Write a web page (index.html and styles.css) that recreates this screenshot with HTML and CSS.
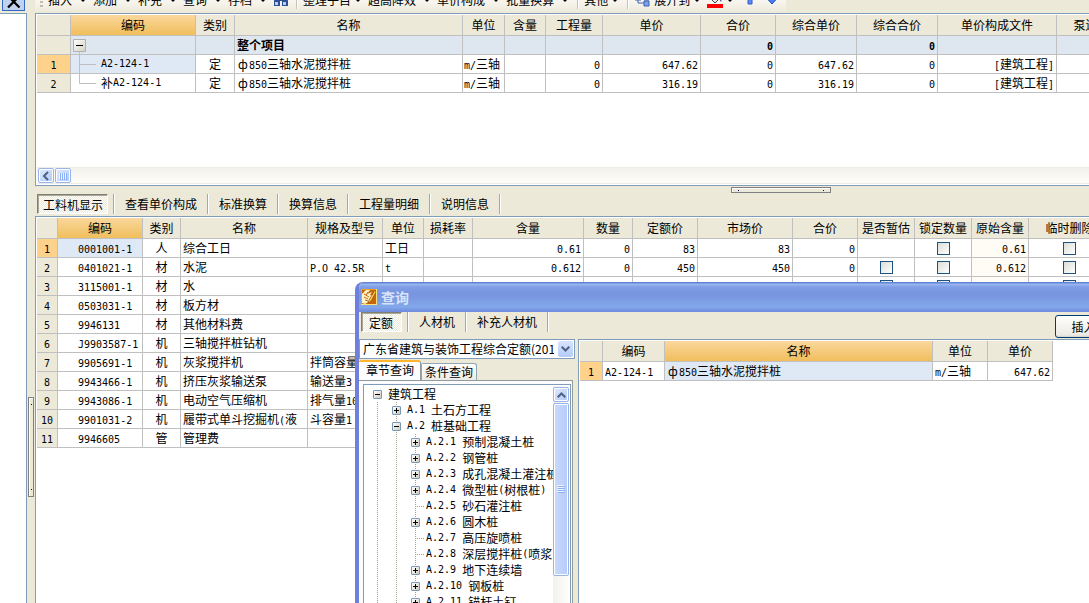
FILE: index.html
```html
<!DOCTYPE html>
<html lang="zh-CN">
<head>
<meta charset="utf-8">
<title>工料机显示</title>
<link rel="stylesheet" href="styles.css">
</head>
<body>
<div class="app">
  <aside class="side">
    <div class="side-head">
      <button class="close" aria-label="关闭"><svg width="14" height="10" viewBox="0 0 14 10"><path d="M1 -4L12.500 7.500M12.500 -4L1 7.500" stroke="#000" stroke-width="2.200"/></svg></button>
    </div>
    <div class="side-body"></div>
  </aside>
  <div class="gutter"><span class="grip-v"></span></div>
  <main class="main">
    <nav class="toolbar">
      <div class="tools">
        <span class="handle"></span>
        <button class="tool">插入<i class="arrow"></i></button>
        <button class="tool">添加<i class="arrow"></i></button>
        <button class="tool">补充<i class="arrow"></i></button>
        <button class="tool">查询<i class="arrow"></i></button>
        <button class="tool">存档<i class="arrow"></i></button>
        <button class="tool icon" aria-label="查找"><svg width="16" height="14" viewBox="0 0 16 14"><path d="M2 0h4v3h4V0h4v4l1 4v5H9V8H7v5H1V8l1-4z" fill="#2c4f94"/><path d="M2 9h3v3H2zM10 9h3v3h-3z" fill="#b9cdf0"/><path d="M3 2h2v4H3zM11 2h2v4h-2z" fill="#6f93d8"/></svg></button>
        <span class="divider"></span>
        <button class="tool tight">整理子目<i class="arrow"></i></button>
        <button class="tool">超高降效<i class="arrow"></i></button>
        <button class="tool">单价构成<i class="arrow"></i></button>
        <button class="tool">批量换算<i class="arrow"></i></button>
        <span class="divider"></span>
        <button class="tool tight">其他<i class="arrow"></i></button>
        <span class="divider"></span>
        <button class="tool tight lead"><svg width="16" height="14" viewBox="0 0 16 14"><path d="M1 2h6v5H1z" fill="#dfe9fb" stroke="#3d63b0"/><path d="M4 7v3h6M7 5h3" stroke="#3d63b0" fill="none"/><path d="M10 3h5v4h-5zM10 8h5v5h-5z" fill="#7ea3e8" stroke="#3d63b0"/></svg>展开到<i class="arrow"></i></button>
        <button class="tool tight" aria-label="填充颜色"><svg width="16" height="16" viewBox="0 0 16 16"><path d="M3 6l5-5 5 5-5 5z" fill="#e8e8e8" stroke="#444"/><path d="M13 5q2 3 1 5l-2-4z" fill="#1c2c80"/><path d="M0 12h16v4H0z" fill="#f00"/></svg><i class="arrow"></i></button>
        <button class="tool move" aria-label="上移"><svg width="10" height="10" viewBox="0 0 10 10"><path d="M5 -4l4 4H7v9H3V0H1z" fill="#5b8df0" stroke="#2f5cc8"/></svg></button>
        <button class="tool move" aria-label="下移"><svg width="12" height="10" viewBox="0 0 12 10"><path d="M4 -2h4v5h3.500L6 9 .5 3H4z" fill="#4a7fee" stroke="#2450bd"/></svg></button>
      </div>
    </nav>

    <section class="panel upper">
      <div class="upper-body">
      <table class="grid">
        <colgroup><col class="w34"><col class="w125"><col class="w39"><col class="w228"><col class="w42"><col class="w41"><col class="w57"><col class="w98"><col class="w75"><col class="w81"><col class="w81"><col class="w119"><col class="w82"></colgroup>
        <thead><tr><th></th><th class="hot">编码</th><th>类别</th><th>名称</th><th>单位</th><th>含量</th><th>工程量</th><th>单价</th><th>合价</th><th>综合单价</th><th>综合合价</th><th>单价构成文件</th><th>泵送类型</th></tr></thead>
        <tbody>
          <tr class="sum"><th></th><td><div class="branch"><svg class="lines" width="30" height="19"><defs><linearGradient id="tg" x2="1" y2="1"><stop offset="0" stop-color="#fff"/><stop offset="1" stop-color="#d4d0c0"/></linearGradient></defs><path d="M8.500 16v3" stroke="#c0c0c0"/><path d="M2.500 3.500h12v12h-12z" fill="url(#tg)" stroke="#b0b0b0"/><path d="M5 9.500h7" stroke="#000"/></svg></div></td><td></td><td>整个项目</td><td></td><td></td><td></td><td></td><td class="r"><span class="n">0</span></td><td></td><td class="r"><span class="n">0</span></td><td></td><td></td></tr>
          <tr><th class="on"><span class="n">1</span></th><td class="sel"><div class="branch"><svg class="lines" width="30" height="19"><path d="M8.500 0v19M8 9.500h17" fill="none" stroke="#c0c0c0"/></svg><span class="n">A2-124-1</span></div></td><td class="c">定</td><td><span class="em">ф</span><span class="n">850</span>三轴水泥搅拌桩</td><td class="t"><span class="n">m/</span>三轴</td><td></td><td class="r"><span class="n">0</span></td><td class="r"><span class="n">647.62</span></td><td class="r"><span class="n">0</span></td><td class="r"><span class="n">647.62</span></td><td class="r"><span class="n">0</span></td><td class="r"><span class="n">[</span>建筑工程<span class="n">]</span></td><td></td></tr>
          <tr><th><span class="n">2</span></th><td><div class="branch"><svg class="lines" width="30" height="19"><path d="M8.500 0v9.500h16.500" fill="none" stroke="#c0c0c0"/></svg>补<span class="n">A2-124-1</span></div></td><td class="c">定</td><td><span class="em">ф</span><span class="n">850</span>三轴水泥搅拌桩</td><td class="t"><span class="n">m/</span>三轴</td><td></td><td class="r"><span class="n">0</span></td><td class="r"><span class="n">316.19</span></td><td class="r"><span class="n">0</span></td><td class="r"><span class="n">316.19</span></td><td class="r"><span class="n">0</span></td><td class="r"><span class="n">[</span>建筑工程<span class="n">]</span></td><td></td></tr>
        </tbody>
      </table>
      </div>
      <div class="hscroll">
        <button class="sb" aria-label="向左滚动"><svg width="8" height="8" viewBox="0 0 8 8"><path d="M6 0L2 4l4 4" fill="none" stroke="#4d6185" stroke-width="2"/></svg></button>
        <button class="sb" aria-label="滑块"><svg width="8" height="8" viewBox="0 0 8 8"><path d="M.5 1v6M2.500 1v6M4.500 1v6M6.500 1v6" stroke="#eef4fe"/><path d="M1.500 1v7M3.500 1v7M5.500 1v7M7.500 1v7" stroke="#8cb0f8"/></svg></button>
      </div>
    </section>

    <div class="tabs">
      <span class="grip-h"></span>
      <button class="tab active">工料机显示</button>
      <button class="tab">查看单价构成</button>
      <button class="tab">标准换算</button>
      <button class="tab">换算信息</button>
      <button class="tab">工程量明细</button>
      <button class="tab">说明信息</button>
      <span class="tab-end"></span>
    </div>

    <section class="panel lower">
      <table class="grid">
        <colgroup><col class="w21"><col class="w85"><col class="w38"><col class="w127"><col class="w75"><col class="w41"><col class="w49"><col class="w111"><col class="w49"><col class="w65"><col class="w95"><col class="w65"><col class="w57"><col class="w57"><col class="w57"><col class="w82"></colgroup>
        <thead><tr><th></th><th class="hot">编码</th><th>类别</th><th>名称</th><th>规格及型号</th><th>单位</th><th>损耗率</th><th>含量</th><th>数量</th><th>定额价</th><th>市场价</th><th>合价</th><th>是否暂估</th><th>锁定数量</th><th>原始含量</th><th>临时删除</th></tr></thead>
        <tbody>
          <tr><th class="on"><span class="n">1</span></th><td class="code sel"><span class="n">0001001-1</span></td><td class="c">人</td><td>综合工日</td><td></td><td>工日</td><td></td><td class="r"><span class="n">0.61</span></td><td class="r"><span class="n">0</span></td><td class="r"><span class="n">83</span></td><td class="r"><span class="n">83</span></td><td class="r"><span class="n">0</span></td><td></td><td class="c"><input type="checkbox" aria-label="锁定数量 1"></td><td class="r orig"><span class="n">0.61</span></td><td class="c"><input type="checkbox" aria-label="临时删除 1"></td></tr>
          <tr><th><span class="n">2</span></th><td class="code"><span class="n">0401021-1</span></td><td class="c">材</td><td>水泥</td><td><span class="n">P.O 42.5R</span></td><td><span class="n">t</span></td><td></td><td class="r"><span class="n">0.612</span></td><td class="r"><span class="n">0</span></td><td class="r"><span class="n">450</span></td><td class="r"><span class="n">450</span></td><td class="r"><span class="n">0</span></td><td class="c"><input type="checkbox" aria-label="是否暂估 2"></td><td class="c"><input type="checkbox" aria-label="锁定数量 2"></td><td class="r orig"><span class="n">0.612</span></td><td class="c"><input type="checkbox" aria-label="临时删除 2"></td></tr>
          <tr><th><span class="n">3</span></th><td class="code"><span class="n">3115001-1</span></td><td class="c">材</td><td>水</td><td></td><td></td><td></td><td></td><td></td><td></td><td></td><td></td><td class="c"><input type="checkbox" aria-label="是否暂估 3"></td><td class="c"><input type="checkbox" aria-label="锁定数量 3"></td><td class="orig"></td><td class="c"><input type="checkbox" aria-label="临时删除 3"></td></tr>
          <tr><th><span class="n">4</span></th><td class="code"><span class="n">0503031-1</span></td><td class="c">材</td><td>板方材</td><td></td></tr>
          <tr><th><span class="n">5</span></th><td class="code"><span class="n">9946131</span></td><td class="c">材</td><td>其他材料费</td><td></td></tr>
          <tr><th><span class="n">6</span></th><td class="code"><span class="n">J9903587-1</span></td><td class="c">机</td><td>三轴搅拌桩钻机</td><td></td></tr>
          <tr><th><span class="n">7</span></th><td class="code"><span class="n">9905691-1</span></td><td class="c">机</td><td>灰浆搅拌机</td><td>拌筒容量</td></tr>
          <tr><th><span class="n">8</span></th><td class="code"><span class="n">9943466-1</span></td><td class="c">机</td><td>挤压灰浆输送泵</td><td>输送量<span class="n">3</span></td></tr>
          <tr><th><span class="n">9</span></th><td class="code"><span class="n">9943086-1</span></td><td class="c">机</td><td>电动空气压缩机</td><td>排气量<span class="n">10</span></td></tr>
          <tr><th><span class="n">10</span></th><td class="code"><span class="n">9901031-2</span></td><td class="c">机</td><td>履带式单斗挖掘机<span class="n">(</span>液</td><td>斗容量<span class="n">1</span></td></tr>
          <tr><th><span class="n">11</span></th><td class="code"><span class="n">9946605</span></td><td class="c">管</td><td>管理费</td><td></td></tr>
        </tbody>
      </table>
    </section>
  </main>
</div>

<div class="dialog" role="dialog" aria-labelledby="dlg-title">
  <header class="title">
    <svg width="16" height="16" viewBox="0 0 16 16"><path d="M0 0h16v16H0z" fill="#f0a010"/><path d="M1 1h14v14H1z" fill="#c8640c"/><path d="M1 5l4-4h4l-3 4 5-2-2 3 3 1-4 3 1 2-5 3-3-1z" fill="#fff4c8"/><path d="M3 5l5 3M3 8l4 2M4 11l3 1M7 3L5 6" stroke="#c8640c"/><path d="M14 1L8 11l-1 3 3-2 5-9z" fill="#ffd850" stroke="#8a3c04" stroke-width=".6"/><path d="M0 15.500h16M15.500 0v16" stroke="#ffe27a"/></svg>
    <span id="dlg-title">查询</span>
  </header>
  <div class="dlg-tabs">
    <button class="tab active">定额</button>
    <button class="tab">人材机</button>
    <button class="tab">补充人材机</button>
    <span class="tab-end"></span>
    <button class="insert">插入<span class="n">(I)</span></button>
  </div>
  <div class="dlg-body">
    <div class="finder">
      <div class="combo">
        <select aria-label="定额库"><option>广东省建筑与装饰工程综合定额(2010)</option></select>
        <span class="drop"><svg width="9" height="6" viewBox="0 0 9 6"><path d="M.7.700l3.800 3.800L8.300.700" fill="none" stroke="#4d6185" stroke-width="2"/></svg></span>
      </div>
      <div class="pages">
        <button class="page current">章节查询</button>
        <button class="page">条件查询</button>
      </div>
      <div class="sheet">
        <div class="treebox">
          <div class="treeview">
            <ul class="tree">
              <li><span class="node"><i class="box minus"></i>建筑工程</span>
                <ul>
                  <li><span class="node"><i class="box plus"></i><span class="n">A.1 </span>土石方工程</span></li>
                  <li><span class="node"><i class="box minus"></i><span class="n">A.2 </span>桩基础工程</span>
                    <ul>
                      <li><span class="node"><i class="box plus"></i><span class="n">A.2.1 </span>预制混凝土桩</span></li>
                      <li><span class="node"><i class="box plus"></i><span class="n">A.2.2 </span>钢管桩</span></li>
                      <li><span class="node"><i class="box plus"></i><span class="n">A.2.3 </span>成孔混凝土灌注桩</span></li>
                      <li><span class="node"><i class="box plus"></i><span class="n">A.2.4 </span>微型桩<span class="n">(</span>树根桩<span class="n">)</span></span></li>
                      <li><span class="node"><i class="box leaf"></i><span class="n">A.2.5 </span>砂石灌注桩</span></li>
                      <li><span class="node"><i class="box plus"></i><span class="n">A.2.6 </span>圆木桩</span></li>
                      <li><span class="node"><i class="box leaf"></i><span class="n">A.2.7 </span>高压旋喷桩</span></li>
                      <li><span class="node"><i class="box leaf"></i><span class="n">A.2.8 </span>深层搅拌桩<span class="n">(</span>喷浆</span></li>
                      <li><span class="node"><i class="box plus"></i><span class="n">A.2.9 </span>地下连续墙</span></li>
                      <li><span class="node"><i class="box plus"></i><span class="n">A.2.10 </span>钢板桩</span></li>
                      <li><span class="node"><i class="box plus"></i><span class="n">A.2.11 </span>锚杆土钉</span></li>
                    </ul>
                  </li>
                </ul>
              </li>
            </ul>
          </div>
          <div class="vscroll">
            <button class="sb" aria-label="向上滚动"><svg width="9" height="6" viewBox="0 0 9 6"><path d="M.7 5.300l3.800-3.800 3.800 3.800" fill="none" stroke="#4d6185" stroke-width="2"/></svg></button>
            <button class="thumb" aria-label="滑块"><svg width="8" height="8" viewBox="0 0 8 8"><path d="M0 .5h7M0 2.500h7M0 4.500h7M0 6.500h7" stroke="#eef4fe"/><path d="M1 1.500h7M1 3.500h7M1 5.500h7M1 7.500h7" stroke="#8cb0f8"/></svg></button>
          </div>
        </div>
      </div>
    </div>
    <div class="results">
      <table class="grid">
        <colgroup><col class="w23"><col class="w62"><col class="w268"><col class="w55"><col class="w65"></colgroup>
        <thead><tr><th></th><th>编码</th><th class="hot">名称</th><th>单位</th><th>单价</th></tr></thead>
        <tbody><tr><th class="on"><span class="n">1</span></th><td><span class="n">A2-124-1</span></td><td class="sel"><span class="em">ф</span><span class="n">850</span>三轴水泥搅拌桩</td><td><span class="n">m/</span>三轴</td><td class="r"><span class="n">647.62</span></td></tr></tbody>
      </table>
    </div>
  </div>
</div>
</body>
</html>
```

FILE: styles.css
```css
* { box-sizing: border-box; }

body {
  margin: 0;
  height: 100vh;
  overflow: hidden;
  background: #ece9d8;
  color: #000;
  font: 12px/16px "Noto Sans CJK SC", sans-serif;
}

button, select { font: inherit; color: inherit; margin: 0; }
button { padding: 0; border: 0; background: none; white-space: nowrap; }
svg { display: block; flex: none; overflow: visible; }
i { font-style: normal; }

/* half-width characters */
.n { font-family: "DejaVu Sans Mono", monospace; font-size: 10px; line-height: 12px; white-space: pre; }
/* full-width symbol */
.em { display: inline-block; width: 12px; text-align: center; line-height: 14px; }

.app { display: flex; height: 100vh; }

.side { flex: none; width: 27px; display: flex; flex-direction: column; }
.side-head { height: 13px; padding: 0 2px; overflow: hidden; }
.close {
  display: block; width: 23px; height: 11px; padding-left: 4px;
  background: #c1d2ee; border: 1px solid #316ac5; border-top: 0;
}
.side-body { flex: 1; background: #fff; border: 1px solid #7f9db9; border-width: 1px 1px 0 0; }

.gutter { position: relative; flex: none; width: 8px; }
.grip-v, .grip-h { position: absolute; background: #ece9d8; border: 1px solid #808080; box-shadow: inset 1px 1px #fff; }
.grip-v { left: 1px; top: 397px; width: 6px; height: 100px; }
.grip-h { left: 696px; top: 1px; width: 100px; height: 6px; }
.grip-v::before, .grip-v::after, .grip-h::before, .grip-h::after {
  content: ""; position: absolute; width: 1px; height: 1px; background: #000080;
}
.grip-v::before { left: 2px; top: 6px; }
.grip-v::after { left: 2px; bottom: 6px; }
.grip-h::before { left: 6px; top: 2px; }
.grip-h::after { right: 6px; top: 2px; }

.main { flex: 1; min-width: 0; display: flex; flex-direction: column; }

.toolbar { flex: none; height: 13px; overflow: hidden; display: flex; align-items: flex-end; }
.tools {
  display: flex; align-items: center; height: 26px; padding: 0 2px 0 5px;
  background: linear-gradient(#fbfaf6, #f6f4ec 60%, #ece9d8);
}
.handle { width: 3px; height: 15px; margin-right: 5px; background: repeating-linear-gradient(#c1beb0 0 2px, transparent 2px 4px); }
.tool { display: flex; align-items: center; height: 26px; }
.arrow { border: 3px solid transparent; border-top-color: #000; border-bottom: 0; margin: 0 7px 0 8px; }
.tight .arrow { margin-left: 4px; }
.icon { margin-right: 5px; }
.lead svg { margin-right: 4px; }
.move { margin: 0 6px 0 5px; }
.divider { width: 2px; height: 18px; margin: 0 5px 0 2px; background: #c5c2b8; border-right: 1px solid #fff; }

.panel { background: #fff; border-left: 1px solid #7f9db9; border-top: 1px solid #7f9db9; padding: 1px 0 0 1px; overflow: hidden; }
.upper { flex: none; border-bottom: 1px solid #7f9db9; padding-bottom: 1px; }
.upper-body { min-height: 152px; }
.lower { flex: 1; }

.grid { table-layout: fixed; width: 1px; border-collapse: separate; border-spacing: 0; }
.grid th, .grid td {
  height: 19px; padding: 0 2px; overflow: hidden; white-space: nowrap;
  border: solid #c0c0c0; border-width: 0 1px 1px 0; text-align: left; font-weight: normal; line-height: 16px;
}
.grid th { background: #ece9d8; text-align: center; padding: 0; }
.grid thead th { height: 21px; }
.grid .hot { background: linear-gradient(#fad79c, #f0be5c); }
.grid .on { background: #ffd28c; }
.grid .sel { background: #dfe9f5; }
.grid .sum td { background: #dee6f0; font-weight: bold; }
.grid .r { text-align: right; }
.grid .c { text-align: center; }
.grid .t { padding: 0 1px; }
.grid .code { padding: 0 0 0 20px; }
.grid .orig { background: #fffbf5; }
.branch { display: flex; align-items: center; height: 18px; margin-left: -2px; }
.lines { height: 19px; }

.w21 { width: 21px; } .w23 { width: 23px; } .w34 { width: 34px; } .w38 { width: 38px; }
.w39 { width: 39px; } .w41 { width: 41px; } .w42 { width: 42px; } .w49 { width: 49px; }
.w55 { width: 55px; } .w57 { width: 57px; } .w62 { width: 62px; } .w65 { width: 65px; }
.w75 { width: 75px; } .w81 { width: 81px; } .w82 { width: 82px; } .w85 { width: 85px; }
.w95 { width: 95px; } .w98 { width: 98px; } .w111 { width: 111px; } .w119 { width: 119px; }
.w125 { width: 125px; } .w127 { width: 127px; } .w228 { width: 228px; } .w268 { width: 268px; }

input[type="checkbox"] {
  appearance: none; display: block; width: 13px; height: 13px; margin: 0 auto;
  border: 1px solid #1c5180; background: linear-gradient(135deg, #dcdcd7, #fff);
}

.hscroll {
  display: flex; gap: 1px; height: 17px; padding: 0 1px;
  border-top: 1px solid #eeede5; border-bottom: 1px solid #eeede5;
  background: linear-gradient(#f3f1ec, #fefefb);
}
.sb {
  flex: none; display: flex; align-items: center; justify-content: center; width: 16px; height: 15px;
  border: 1px solid #98b4ee; border-radius: 2px; box-shadow: inset 0 0 0 1px #fff;
  background: linear-gradient(135deg, #e1eafe, #aec8f7);
}

.tabs { position: relative; flex: none; display: flex; height: 30px; padding: 8px 0 2px 2px; }
.tab { height: 20px; padding: 0 10px 0 11px; border-left: 1px solid #aca899; box-shadow: inset 1px 0 #fff; }
.tab-end { width: 2px; height: 20px; border-left: 1px solid #aca899; background: #fff; }
.tab.active {
  margin-right: 5px; padding: 2px 4px 0 5px;
  border: 1px solid #fff; border-top-color: #808070; border-left-color: #808070;
  box-shadow: inset 1px 1px #aca899;
  background: repeating-conic-gradient(#fff 0 25%, #ece9d8 0 50%) 0 0 / 2px 2px;
}

.dialog {
  position: absolute; left: 355px; top: 282px; right: 0; bottom: 0; overflow: hidden;
  display: flex; flex-direction: column;
  background: #ece9d8; border-left: 4px solid #6f7fdc; border-radius: 8px 0 0 0;
}
.title {
  flex: none; display: flex; align-items: center; gap: 4px; height: 30px; margin-left: -4px; padding: 0 0 0 6px;
  background: linear-gradient(#5f84d8 0 1px, #9db9f0 2px, #7e9ee6 5px, #7893df 12px, #7b9be3 17px, #82a8ea 25px, #728ee0 29px);
  color: #d8e4f8; font-size: 14px; font-weight: bold;
}
.dlg-tabs { flex: none; display: flex; height: 27px; padding: 0 0 0 2px; }
.dlg-tabs .active { padding: 2px 8px 0 7px; }
.insert {
  flex: none; width: 75px; height: 23px; margin: 3px -41px 0 auto;
  border: 1px solid #003c74; border-radius: 3px; background: linear-gradient(#fff, #ecebe6 90%, #d6d0c5);
}
.dlg-body { flex: 1; min-height: 0; display: flex; gap: 3px; }
.finder { flex: none; width: 216px; display: flex; flex-direction: column; }
.combo { position: relative; height: 20px; }
.combo select {
  appearance: none; display: block; width: 100%; height: 20px; padding: 0 20px 0 3px;
  border: 1px solid #7f9db9; border-radius: 0; background: #fff; text-overflow: clip; overflow: hidden;
}
.drop {
  position: absolute; right: 2px; top: 2px; width: 15px; height: 16px; pointer-events: none;
  display: flex; align-items: center; justify-content: center;
  border-radius: 2px; background: linear-gradient(#d8e4fd, #b4cbf8);
}
.pages { display: flex; align-items: flex-end; margin-top: 1px; height: 20px; }
.page { height: 17px; padding: 0 3px; border: 1px solid #91a7b4; border-bottom: 0; border-radius: 2px 3px 0 0; background: linear-gradient(#fff, #ecebe6); }
.page.current { height: 20px; padding: 0 6px 2px 7px; border: 0; border-top: 2px solid #ffb62c; border-right: 1px solid #919b9c; background: #fcfcfe; }
.sheet { flex: 1; min-height: 0; display: flex; margin-right: 2px; padding: 3px 1px 0 4px; border: 1px solid #919b9c; border-width: 1px 1px 0 0; background: #fcfcfe; }
.treebox { flex: 1; min-width: 0; display: flex; padding: 1px 1px 0; border: 1px solid #7f9db9; border-bottom: 0; background: #fff; }
.treeview { flex: 1; min-width: 0; overflow: hidden; padding-left: 8px; }
.tree, .tree ul { list-style: none; margin: 0; padding: 0; }
.tree ul {
  padding-left: 19px;
  background:
    repeating-linear-gradient(#a0a090 0 1px, transparent 1px 2px) 4px 0 / 1px 100% no-repeat,
    repeating-linear-gradient(#a0a090 0 1px, transparent 1px 2px) 23px 0 / 1px 100% no-repeat;
}
.node { display: flex; align-items: center; height: 16px; white-space: pre; }
.box {
  position: relative; flex: none; width: 9px; height: 9px; margin-right: 6px;
  border: 1px solid #7898b5; border-radius: 1px; background: linear-gradient(135deg, #fff, #d0cabc);
}
.box::before, .plus::after { content: ""; position: absolute; background: #000; }
.box::before { left: 1px; top: 3px; width: 5px; height: 1px; }
.plus::after { left: 3px; top: 1px; width: 1px; height: 5px; }
.leaf { border-color: transparent; background: none; }
.leaf::before { left: 3px; width: 10px; background: repeating-linear-gradient(90deg, #a0a090 0 1px, transparent 1px 2px); }

.vscroll { flex: none; width: 16px; height: 100%; padding-top: 1px; background: linear-gradient(90deg, #f3f1ec, #fefefb); }
.vscroll .sb { margin-bottom: 1px; }
.thumb {
  display: flex; align-items: center; justify-content: center; width: 16px; height: 80%;
  border: 1px solid #98b4ee; border-radius: 2px; box-shadow: inset 0 0 0 1px #fff;
  background: linear-gradient(90deg, #cbdafd, #b5cbf9);
}
.results { flex: 1; min-width: 0; overflow: hidden; padding: 1px 0 0 1px; background: #fff; border: 1px solid #7f9db9; border-width: 1px 0 0 1px; }
```
